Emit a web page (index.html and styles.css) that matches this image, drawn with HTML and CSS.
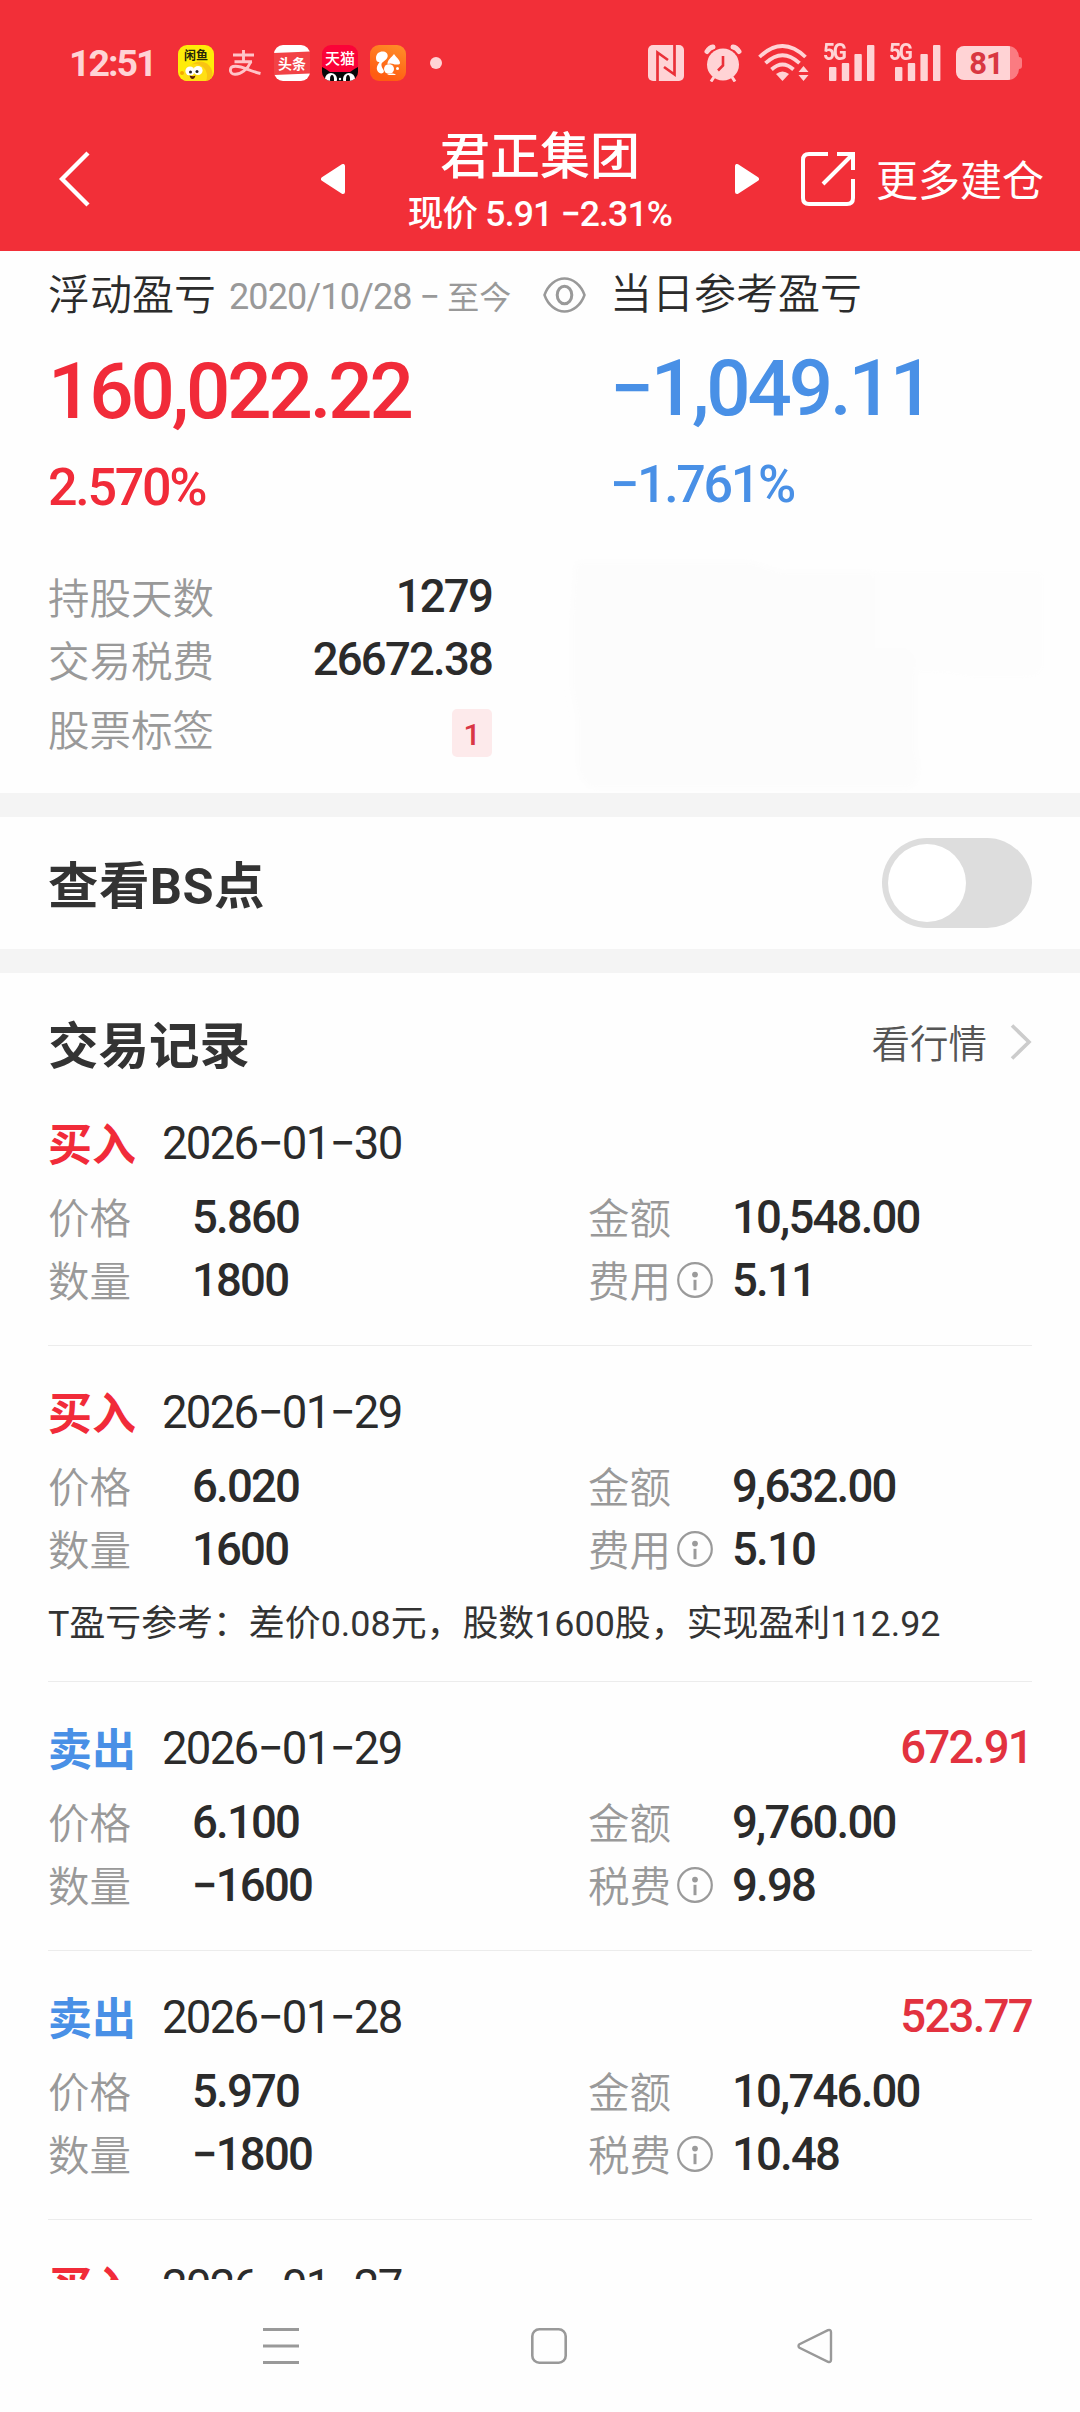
FILE: index.html
```html
<!DOCTYPE html>
<html lang="zh-CN">
<head>
<meta charset="utf-8">
<title>君正集团</title>
<link rel="stylesheet" href="styles.css">
</head>
<body>
<svg class="defs" width="0" height="0" aria-hidden="true">
  <symbol id="info" viewBox="0 0 36 36">
    <circle cx="18" cy="18" r="16.8" fill="none" stroke="#9a9a9a" stroke-width="2.2"/>
    <circle cx="18" cy="12.6" r="2.9" fill="#9a9a9a"/>
    <path d="M18 17.8v10.4" stroke="#9a9a9a" stroke-width="3"/>
  </symbol>
  <symbol id="signal" viewBox="0 0 46 37">
    <g fill="#ffd3d5">
      <rect x="0" y="22" width="7.4" height="14" rx="1"/>
      <rect x="12.8" y="18" width="7.4" height="18" rx="1"/>
      <rect x="25.4" y="9" width="7.4" height="27" rx="1"/>
      <rect x="38" y="0" width="7.4" height="36" rx="1"/>
    </g>
  </symbol>
</svg>

<div class="phone">
  <header class="top">
    <div class="status">
      <span class="clock">12:51</span>
      <div class="apps">
        <svg width="36" height="36" viewBox="0 0 36 36">
          <defs><clipPath id="app"><rect width="36" height="36" rx="9"/></clipPath></defs>
          <g clip-path="url(#app)">
            <rect width="36" height="36" fill="#ffec08"/>
            <circle cx="22" cy="29" r="12.5" fill="#f9c413"/>
            <circle cx="17" cy="31" r="12" fill="#ffdf15"/>
            <circle cx="4" cy="28" r="2" fill="#f5a800"/>
            <circle cx="12" cy="26" r="4.6" fill="#fff"/><circle cx="20" cy="25.500" r="4.600" fill="#fff"/>
            <circle cx="12.500" cy="27" r="1.500" fill="#222"/><circle cx="19" cy="26.500" r="1.500" fill="#222"/>
            <path d="M11.500 30.500q4 1.500 6 0q-1 3.500-3 3.500t-3-3.500z" fill="#5a1c06"/>
          </g>
          <text x="18" y="15.200" text-anchor="middle" class="app-text dark">闲鱼</text>
        </svg>
        <svg width="36" height="36" viewBox="0 0 36 36">
          <g fill="none" stroke="#ffc4c8" stroke-width="2.900">
            <path d="M7 10h21M17.500 5v11.500M8.500 16.800h17.500"/>
            <path d="M25 16.500c-3.500 8-10 13-16 12.800c-6-.4-6.500-8 .5-8c8 0 14 4.800 25 7.200"/>
          </g>
        </svg>
        <svg width="36" height="36" viewBox="0 0 36 36">
          <rect width="36" height="36" rx="9" fill="#fff"/>
          <path d="M0 8l36-1.500v22l-36 1.500z" fill="#f24246"/>
          <text x="18" y="23.500" text-anchor="middle" class="app-text big">头条</text>
        </svg>
        <svg width="36" height="36" viewBox="0 0 36 36">
          <g clip-path="url(#app)">
            <rect width="36" height="36" fill="#fb0338"/>
            <path d="M0 22q4 2 8 5h20q4-3 8-5v14h-36z" fill="#080808"/>
            <circle cx="9" cy="34" r="6" fill="#fff"/><circle cx="27" cy="34" r="6" fill="#fff"/>
            <ellipse cx="10" cy="34.500" rx="2" ry="4.500" fill="#080808"/><ellipse cx="26" cy="34.500" rx="2" ry="4.500" fill="#080808"/>
            <circle cx="18" cy="34" r="1.200" fill="#fff"/>
          </g>
          <text x="18" y="18.500" text-anchor="middle" class="app-text huge">天猫</text>
        </svg>
        <svg width="36" height="36" viewBox="0 0 36 36">
          <defs><linearGradient id="uc" x1="1" y1="0" x2=".6" y2="1"><stop offset="0" stop-color="#ff9029"/><stop offset="1" stop-color="#ff5c12"/></linearGradient></defs>
          <rect width="36" height="36" rx="9" fill="url(#uc)"/>
          <path d="M6 13c0-5 4-7 7.500-6.500c4 .5 5.500 4.500 3 7.500c-2 2.500-5.500 3-5 6.500c.3 3 3 4 2.300 6.500c-.8 2-4.800 2-6.300-1c-2-4 1-7 2-9c-2 .5-3.500-1-3.500-4z" fill="#fff"/>
          <path d="M17.500 19c0-5 4-6 6.500-10l1.500 2c1.500 2 4.500 4 4.500 7c0 2-3 1.500-4.500 1.500s-4-2-8-.5z" fill="#fff"/>
          <ellipse cx="19" cy="24" rx="5" ry="4.800" fill="#fff"/>
          <path d="M17 30q2-2 6-1.500q2 0 3 1.500z" fill="#fff"/>
          <circle cx="27.500" cy="23.500" r="1.500" fill="#fff"/>
        </svg>
        <i class="dot"></i>
      </div>
      <div class="system">
        <svg class="nfc" width="36" height="36" viewBox="0 0 36 36">
          <rect width="36" height="36" rx="5" fill="#ffd3d5"/>
          <path d="M9.500 36v-28.500l10.500 7.500M26.500 0v29.500l-10.500-7.500" fill="none" stroke="#ea3038" stroke-width="2.700"/>
        </svg>
        <svg class="alarm" width="38" height="38" viewBox="0 0 38 38">
          <g fill="none" stroke="#ffd3d5" stroke-width="5" stroke-linecap="round"><path d="M3 7.500q2.500-4 6-4.500M35 7.500q-2.500-4-6-4.500"/></g>
          <circle cx="19" cy="20.500" r="16" fill="#ffd3d5"/>
          <path d="M10 33l-3 4.500M28 33l3 4.500" stroke="#ffd3d5" stroke-width="3"/>
          <path d="M19 12v9.500l-5 5" fill="none" stroke="#ea3038" stroke-width="2.600"/>
        </svg>
        <svg class="wifi" width="52" height="38" viewBox="0 0 52 38">
          <g fill="none" stroke="#ffd3d5" stroke-width="3.800">
            <path d="M1.500 13q23-22 46 0"/><path d="M7.500 19.200q17-16 34 0"/><path d="M13.500 25.500q11-10 22 0"/>
          </g>
          <path d="M18 30q6.500-5 13 0l-6.500 7z" fill="#ffd3d5"/>
          <path d="M45.500 22l5 6h-10zM45.500 37l-5-6h10z" fill="#ffd3d5"/>
        </svg>
        <div class="cell"><b>5G</b><svg width="46" height="37"><use href="#signal"/></svg></div>
        <div class="cell"><b>5G</b><svg width="46" height="37"><use href="#signal"/></svg></div>
        <div class="battery"><span>81</span></div>
      </div>
    </div>
    <nav class="bar">
      <svg class="back" width="32" height="56" viewBox="0 0 32 56"><path d="M29 2L3 28l26 26" fill="none" stroke="#fff" stroke-width="4.400"/></svg>
      <svg class="prev" width="24" height="30" viewBox="0 0 24 30"><path d="M22 2v26L2 15z" fill="#fff" stroke="#fff" stroke-width="4" stroke-linejoin="round"/></svg>
      <div class="title"><h1>君正集团</h1><p>现价 <span>5.91</span> <span>−2.31%</span></p></div>
      <svg class="next" width="24" height="30" viewBox="0 0 24 30"><path d="M2 2v26l20-13z" fill="#fff" stroke="#fff" stroke-width="4" stroke-linejoin="round"/></svg>
      <svg class="share" width="54" height="54" viewBox="0 0 54 54"><path d="M27 2H8q-6 0-6 6v38q0 6 6 6h38q6 0 6-6V27M36 2h16v16M51 3L22 32" fill="none" stroke="#fff" stroke-width="4"/></svg>
      <span class="more">更多建仓</span>
    </nav>
  </header>

  <section class="summary">
    <div class="profit total">
      <div class="caption">浮动盈亏<span class="range">2020/10/28 − <em>至今</em></span>
        <svg class="eye" width="43" height="36" viewBox="0 0 43 36"><path d="M1.500 18C5 8 13 1.500 21.500 1.500S38 8 41.500 18C38 28 30 34.500 21.500 34.500S5 28 1.500 18z" fill="none" stroke="#999" stroke-width="2.500"/><ellipse cx="21.500" cy="18" rx="7.300" ry="8.800" fill="none" stroke="#999" stroke-width="3"/></svg>
      </div>
      <div class="amount">160,022.22</div>
      <div class="percent">2.570%</div>
    </div>
    <div class="profit today">
      <div class="caption">当日参考盈亏</div>
      <div class="amount">−1,049.11</div>
      <div class="percent">−1.761%</div>
    </div>
    <dl class="stats">
      <div><dt>持股天数</dt><dd>1279</dd></div>
      <div><dt>交易税费</dt><dd>26672.38</dd></div>
      <div class="tags"><dt>股票标签</dt><dd class="tag">1</dd></div>
    </dl>
    <svg class="shade" width="490" height="245" viewBox="0 0 490 245">
      <defs><filter id="soft" x="-5%" y="-5%" width="110%" height="110%"><feGaussianBlur stdDeviation="3"/></filter></defs>
      <g filter="url(#soft)">
        <path d="M300 25h180v95q-4 8-14 8h-60q-12-5-34-5H300z" fill="#fdfdfd"/>
        <path d="M14 14h175l30 10h92v78h32q10 4 10 20v80q10 30-6 38H30q-12-5-14-25V170L10 140V70z" fill="#fcfcfc"/>
      </g>
    </svg>
  </section>

  <section class="switch-row">
    <h2>查看BS点</h2>
    <span class="toggle"><i></i></span>
  </section>

  <section class="trades">
    <div class="trades-head">
      <h2>交易记录</h2>
      <span class="quote">看行情</span>
      <svg class="chevron" width="22" height="36" viewBox="0 0 22 36"><path d="M2 1.500L19 18 2 34.500" fill="none" stroke="#ccc" stroke-width="3.600"/></svg>
    </div>

    <article class="record">
      <div class="head"><b class="buy">买入</b><time>2026−01−30</time></div>
      <dl>
        <dt>价格</dt><dd>5.860</dd><dt>金额</dt><dd>10,548.00</dd>
        <dt>数量</dt><dd>1800</dd><dt>费用<svg><use href="#info"/></svg></dt><dd>5.11</dd>
      </dl>
    </article>
    <article class="record">
      <div class="head"><b class="buy">买入</b><time>2026−01−29</time></div>
      <dl>
        <dt>价格</dt><dd>6.020</dd><dt>金额</dt><dd>9,632.00</dd>
        <dt>数量</dt><dd>1600</dd><dt>费用<svg><use href="#info"/></svg></dt><dd>5.10</dd>
      </dl>
      <p class="note">T盈亏参考：差价0.08元，股数1600股，实现盈利112.92</p>
    </article>
    <article class="record">
      <div class="head"><b class="sell">卖出</b><time>2026−01−29</time><span class="gain">672.91</span></div>
      <dl>
        <dt>价格</dt><dd>6.100</dd><dt>金额</dt><dd>9,760.00</dd>
        <dt>数量</dt><dd>−1600</dd><dt>税费<svg><use href="#info"/></svg></dt><dd>9.98</dd>
      </dl>
    </article>
    <article class="record">
      <div class="head"><b class="sell">卖出</b><time>2026−01−28</time><span class="gain">523.77</span></div>
      <dl>
        <dt>价格</dt><dd>5.970</dd><dt>金额</dt><dd>10,746.00</dd>
        <dt>数量</dt><dd>−1800</dd><dt>税费<svg><use href="#info"/></svg></dt><dd>10.48</dd>
      </dl>
    </article>
    <article class="record">
      <div class="head"><b class="buy">买入</b><time>2026−01−27</time></div>
    </article>
  </section>

  <footer class="nav">
    <svg width="36" height="36" viewBox="0 0 36 36"><path d="M0 1.500h36M0 18h36M0 34.500h36" stroke="#999" stroke-width="2.800"/></svg>
    <svg width="36" height="36" viewBox="0 0 36 36"><rect x="1.300" y="1.300" width="33.400" height="33.400" rx="7" fill="none" stroke="#999" stroke-width="2.600"/></svg>
    <svg width="36" height="36" viewBox="0 0 36 36"><path d="M31 2.200L2.500 16.200q-2 1.800 0 3.600L31 33.800q3 1 3-2V4.200q0-3-3-2z" fill="none" stroke="#999" stroke-width="2.400"/></svg>
  </footer>
</div>
</body>
</html>
```
FILE: styles.css
```css
* { box-sizing: border-box; margin: 0; padding: 0; }
body {
  width: 1080px;
  height: 2412px;
  overflow: hidden;
  background: #fefefe;
  color: #2b2b2b;
  font-family: Roboto, "Noto Sans CJK SC", sans-serif;
}
svg { display: block; flex: none; }
i, em { font-style: normal; }
.defs { position: absolute; }
.phone { display: flex; flex-direction: column; height: 2412px; }

/* status bar and title bar */
.top { height: 251px; background: #f22f38; color: #fff; flex: none; }
.status { display: flex; align-items: center; height: 107px; padding: 19px 61px 0 69px; }
.clock { width: 109px; font-size: 37.500px; font-weight: 700; line-height: 40px; letter-spacing: -2px; color: #ffd3d5; }
.apps { display: flex; align-items: center; gap: 12px; }
.app-text { font-weight: 700; font-size: 12px; fill: #fff; }
.app-text.dark { fill: #26260a; }
.app-text.big { font-size: 14px; }
.app-text.huge { font-size: 15px; font-weight: 500; }
.dot { width: 12px; height: 12px; margin-left: 12px; border-radius: 50%; background: #ffd3d5; }
.system { display: flex; align-items: center; margin-left: auto; }
.alarm { margin-left: 20px; }
.wifi { margin-left: 16px; }
.cell { position: relative; width: 51px; height: 37px; margin-left: 13px; padding-left: 6px; }
.cell + .cell { margin-left: 15px; }
.cell b { position: absolute; left: 0; top: -2px; font-size: 23px; line-height: 20px; letter-spacing: -2.5px; color: #ffd3d5; }
.cell b { left: 0; transform: scaleX(.9); transform-origin: 0 0; }
.battery {
  position: relative;
  width: 63px; height: 34px; margin-left: 16px; padding-right: 3px;
  border-radius: 8px 11px 11px 8px;
  background: linear-gradient(90deg, #ffd3d5 54px, #fb7b81 54px);
  color: #d93741; text-align: center; font-size: 31px; font-weight: 700; line-height: 35px; letter-spacing: -1px;
}
.battery::after { content: ""; position: absolute; right: -3px; top: 11px; width: 3px; height: 12px; border-radius: 0 3px 3px 0; background: #fb7b81; }
.bar { display: flex; align-items: center; height: 144px; padding-left: 59px; }
.prev { margin-left: 230px; }
.title { width: 390px; padding-top: 10px; text-align: center; white-space: nowrap; }
.title h1 { font-size: 50px; font-weight: 500; line-height: 56px; }
.title p { margin-top: 3px; font-size: 35.500px; font-weight: 500; line-height: 52px; letter-spacing: -.8px; }
.share { margin-left: 42px; }
.more { margin-left: 21px; padding-top: 6px; font-size: 42px; font-weight: 400; line-height: 50px; }

/* profit summary */
.summary {
  position: relative; flex: none;
  display: grid; grid-template-columns: 562px 1fr; grid-template-rows: 316px 1fr;
  height: 542px; padding-left: 48px;
}
.profit { padding-top: 19px; font-weight: 500; white-space: nowrap; }
.caption { display: flex; align-items: center; height: 52px; font-size: 42px; font-weight: 350; line-height: 52px; }
.range { width: 286px; margin-left: 13px; padding-top: 3px; font-size: 36px; font-weight: 400; letter-spacing: -.9px; color: #999; }
.range em { font-size: 32px; letter-spacing: 0; }
.eye { margin: -3px 0 0 28px; }
.amount { margin-top: 25px; font-size: 78px; line-height: 90px; letter-spacing: -3.1px; }
.percent { margin-top: 21px; font-size: 52px; line-height: 60px; letter-spacing: -2.300px; }
.total .amount, .total .percent { color: #f12b39; }
.today { padding-top: 18px; }
.today .amount { margin-top: 23px; color: #4990e6; }
.today .percent { color: #4990e6; }
.stats { width: 444px; }
.stats div { display: flex; justify-content: space-between; height: 63px; }
.stats .tags { margin-top: 6px; }
dt { font-size: 41.500px; font-weight: 350; line-height: 66px; color: #999; }
dd { font-size: 45.500px; font-weight: 500; line-height: 59px; letter-spacing: -1.800px; }
.stats .tag { width: 40px; height: 48px; margin-top: 10px; border-radius: 5px; background: #fdeaeb; color: #d93745; text-align: center; font-size: 30px; line-height: 51px; letter-spacing: 0; }
.shade { position: absolute; left: 562px; top: 297px; }

/* switch */
.switch-row {
  display: flex; justify-content: space-between; align-items: center; flex: none;
  height: 180px; padding: 0 48px; border: solid #f4f4f4; border-width: 24px 0;
}
h2 { font-size: 50.500px; font-weight: 700; line-height: 56px; color: #333; }
.toggle { width: 150px; height: 90px; padding: 6px; border-radius: 45px; background: #ddd; }
.toggle i { display: block; width: 78px; height: 78px; border-radius: 50%; background: #fff; }
.switch-row h2 { padding-top: 7px; letter-spacing: .4px; }

/* trade records */
.trades { height: 1307px; overflow: hidden; padding: 46px 48px 0; flex: none; }
.trades-head { display: flex; height: 58px; }
.quote { margin-left: auto; font-size: 38.500px; font-weight: 350; line-height: 51px; color: #555; }
.chevron { margin: 5px 0 0 23px; }
.record { padding: 41px 0 32px; border-bottom: 1px solid #ececec; }
.head { display: flex; height: 50px; margin-bottom: 19px; align-items: center; font-size: 45.500px; line-height: 50px; letter-spacing: -1.700px; }
.head b { width: 114px; padding-top: 5px; font-size: 44px; letter-spacing: 0; }
.buy { color: #f12b39; }
.sell { color: #4990e6; }
.gain { margin-left: auto; color: #e2323f; font-weight: 500; }
time { padding-top: 1px; font-weight: 450; }
.record dl { display: grid; grid-template-columns: 144px 396px 144px 1fr; grid-auto-rows: 63px; }
.record dt { display: flex; }
.record dt svg { width: 36px; height: 36px; margin: 12px 0 0 6px; }
.record dd { line-height: 61px; }
.note { margin: 19px 0 2px; height: 46px; font-size: 35.900px; font-weight: 400; line-height: 46px; white-space: nowrap; color: #333; }

/* system navigation */
.nav { display: flex; gap: 232px; padding: 48px 0 0 263px; height: 132px; }
.nav svg:last-child { margin-left: -2px; }
```
